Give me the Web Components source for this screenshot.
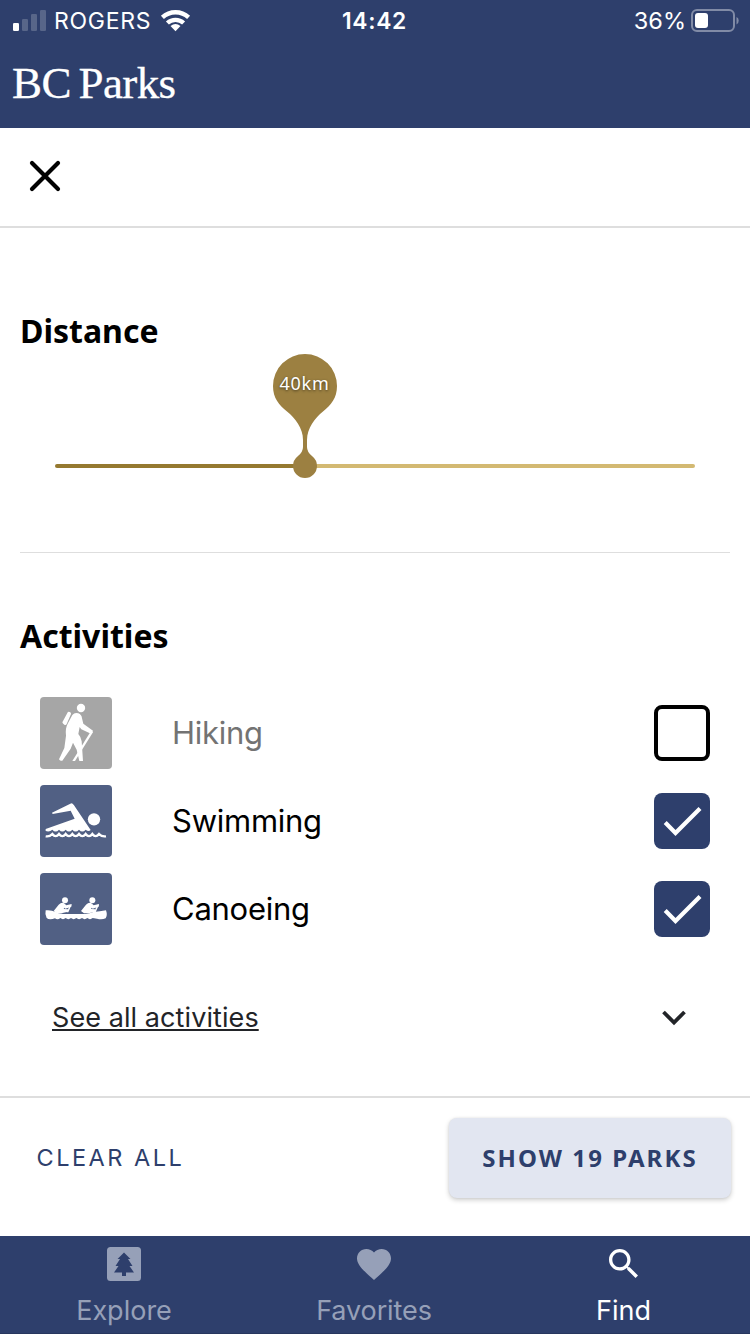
<!DOCTYPE html>
<html lang="en">
<head>
<meta charset="utf-8">
<title>BC Parks</title>
<style>
body{margin:0;background:#fff;font-family:Inter,"Liberation Sans",sans-serif}
</style>
</head>
<body>
<park-app></park-app>
<script>
function define(name, html) {
  const t = document.createElement('template');
  t.innerHTML = html;
  customElements.define(name, class extends HTMLElement {
    constructor() {
      super();
      this.attachShadow({mode: 'open'}).appendChild(t.content.cloneNode(true));
    }
  });
}

define('status-bar', `
<style>
:host{display:grid;grid-template-columns:1fr auto 1fr;height:40px;align-items:center;color:#fff;font-size:24px;line-height:42px;white-space:nowrap}
.l,.r{display:flex;align-items:center;height:40px}
.l{padding-left:13px}
.r{justify-content:flex-end;padding-right:11px}
.c{letter-spacing:.7px;font-weight:600;font-size:22.800px;margin-right:1px}
.l span{margin-left:7px;width:98px;font-size:23px;letter-spacing:.7px}
.l svg{display:block}
.r span{margin-right:5px;font-size:23.5px}
</style>
<div class="l">
 <svg width="34" height="22" viewBox="0 0 34 22" style="margin-top:-1px"><rect x="0" y="13" width="6" height="8" rx="1.3" fill="#fff"/><g fill="#fff" opacity=".2"><rect x="9" y="9" width="6" height="12" rx="1.3"/><rect x="18" y="4" width="6" height="17" rx="1.3"/><rect x="27" y="0" width="6" height="21" rx="1.3"/></g></svg>
 <span>ROGERS</span>
 <svg style="margin-left:8px;margin-top:-2px" width="32" height="23" viewBox="0 0 32 23"><g fill="none" stroke="#fff" stroke-width="4.400"><path d="M2.400 8.400a19.200 19.200 0 0 1 26.200 0"/><path d="M7.400 14a12 12 0 0 1 16.200 0"/></g><path fill="#fff" d="M15.500 22.300l-5-5.200q5-4.200 10 0z"/></svg>
</div>
<div class="c">14:42</div>
<div class="r"><span>36%</span><svg width="48" height="24" viewBox="0 0 48 24"><rect x="1" y="1" width="42" height="21" rx="5" fill="none" stroke="#fff" stroke-opacity=".4" stroke-width="2"/><rect x="4" y="4" width="13" height="15" rx="3" fill="#fff"/><path d="M45.500 8v7.500q2.200-1 2.200-3.800T45.500 8z" fill="#fff" opacity=".4"/></svg></div>
`);

define('brand-header', `
<style>
:host{display:block;height:128px;background:#2e3f6c}
.brand{display:block;padding-left:12px;margin-top:15px;color:#fff;font:45px/56px "Liberation Serif",serif;letter-spacing:-.6px;word-spacing:-3px;-webkit-text-stroke:.3px #fff;white-space:nowrap}
</style>
<status-bar></status-bar><div class="brand">BC Parks</div>
`);

define('close-bar', `
<style>
:host{display:flex;align-items:center;box-sizing:border-box;height:100px;padding-left:29px;padding-bottom:2px;border-bottom:2px solid #dedede}
svg{display:block}
</style>
<svg width="32" height="32" viewBox="0 0 32 32"><path d="M3 3l26 26M29 3L3 29" stroke="#000" stroke-width="4.200" stroke-linecap="round"/></svg>
`);

define('section-title', `
<style>:host{display:block;color:#000;font:700 32px/44px "Noto Sans","Open Sans",sans-serif;white-space:nowrap}</style><slot></slot>
`);

define('range-slider', `
<style>
:host{display:block;position:relative;height:124px;margin:0 35px}
.track{display:flex;height:4px;padding-top:110px}
.a{width:250px;background:#957930;border-radius:2px 0 0 2px}
.b{flex:1;background:#d3b972;border-radius:0 2px 2px 0}
svg{position:absolute;left:218px;top:0}
.v{position:absolute;left:218px;top:18px;width:64px;text-align:center;color:#fff;font:18px/22px "Noto Sans",sans-serif;letter-spacing:.7px;text-shadow:0 1px 3px rgba(0,0,0,.6);text-indent:-1px;white-space:nowrap}
</style>
<div class="track"><div class="a"></div><div class="b"></div></div>
<svg width="64" height="124" viewBox="0 0 64 124"><path fill="#9c8041" d="M32 0A32 32 0 0 1 64 32C64 44 58 51 50 57.500C42 64 34 74 34 86V93Q34 98 39 102Q44 106 44 112A12 12 0 0 1 20 112Q20 106 25 102Q30 98 30 93V86C30 74 22 64 14 57.500C6 51 0 44 0 32A32 32 0 0 1 32 0Z"/></svg>
<div class="v"><slot></slot></div>
`);

define('activity-row', `
<style>
:host{display:flex;align-items:center;height:72px;padding:0 40px;margin-bottom:16px;color:#000}
.tile{width:72px;height:72px;border-radius:4px;background:#516084;overflow:hidden}
:host([off]) .tile{background:#a6a6a6}
.name{flex:1;margin-left:60px;font-size:31px;line-height:44px;white-space:nowrap;letter-spacing:-.26px}
:host([off]) .name{color:#737373}
.box{box-sizing:border-box;width:56px;height:56px;border-radius:8px;background:#2e3f6c}
:host([off]) .box{background:#fff;border:4px solid #000}
:host([off]) .box svg{display:none}
svg{display:block}
</style>
<div class="tile"><slot name="icon"></slot></div>
<div class="name"><slot></slot></div>
<div class="box"><svg width="56" height="56" viewBox="0 0 56 56"><path d="M11.200 29.500L21.500 40L46 15.500" fill="none" stroke="#fff" stroke-width="4.200"/></svg></div>
`);

define('icon-hiking', `
<style>:host,svg{display:block}</style>
<svg width="72" height="72" viewBox="0 0 216 216"><g fill="#fff"><circle cx="123" cy="33" r="12.500"/><path d="M82 48q2-5 7-3t4 6L80 81q-2 5-7 2t-6-7z"/><path d="M97 54Q104 45 115 49Q125 53 126 64L130 80L159 101L156 109L148 108L124 97L119 90L115 111Q122 118 125 133L129 192H118L110 158L99 137L92 155L67 191Q61 193 57 187L73 153L78 116Q75 95 83 80Z"/><path d="M153 102l6 4-54 86h-8z"/></g></svg>
`);

define('icon-swimming', `
<style>:host,svg{display:block}</style>
<svg width="72" height="72" viewBox="0 0 216 216"><g fill="#fff"><circle cx="162" cy="103" r="18.500"/><path d="M36 83L94 55Q98 55 102 61L152 135Q146 142 137 134Q127 145 117 134Q107 145 97 134Q87 145 77 134Q67 145 57 134Q47 145 37 134Q29 142 17 138V132L104 101L92 77L38 87Z"/></g><path d="M17 154q12 2 20-7q10 13 20 0q10 13 20 0q10 13 20 0q10 13 20 0q10 13 20 0q10 13 20 0q10 13 20 0q8 9 21 7" fill="none" stroke="#fff" stroke-width="7"/></svg>
`);

define('icon-canoeing', `
<style>:host,svg{display:block}</style>
<svg width="72" height="72" viewBox="0 0 216 216"><defs><g id="p"><circle cx="75" cy="82" r="9"/><path d="M41 114L56 95Q66 86 74 92L79 97L95 93L94 101L76 107L73 104L71 108L84 109V116L64 121H50Z"/><path d="M90 95l4 2-9 21h-5z"/></g></defs><g fill="#fff"><use href="#p"/><use href="#p" x="82"/><path d="M17 112Q33 110 47 117Q56 123 82 123H138Q148 122 160 117Q180 116 198 112Q203 126 197 136Q185 141 171 137L158 135Q150 142 142 135Q134 142 126 135Q117 142 109 135Q101 142 93 135Q85 142 77 135Q69 142 61 135Q53 142 45 136Q28 142 20 135Q14 125 17 112Z"/></g></svg>
`);

define('see-all', `
<style>
:host{display:flex;justify-content:space-between;align-items:center;height:40px;padding:0 64px 0 52px;color:#222428}
span{font-size:27px;line-height:32px;letter-spacing:.08px;text-decoration:underline;text-decoration-thickness:2px;text-underline-offset:2px;text-decoration-skip-ink:none;white-space:nowrap}
svg{display:block}
</style>
<span><slot></slot></span><svg width="24" height="16" viewBox="0 0 24 16"><path d="M1.500 2L12 12.500L22.500 2" fill="none" stroke="#222428" stroke-width="3.800"/></svg>
`);

define('action-bar', `
<style>
:host{display:flex;box-sizing:border-box;height:140px;border-top:2px solid #dedede;padding:20px 19px 0 36.500px;justify-content:space-between;color:#2e3f6c}
.clear{font-size:23.500px;line-height:80px;letter-spacing:2.5px;white-space:nowrap}
.show{width:282px;height:80px;border-radius:8px;background:#e2e6f1;box-shadow:0 2px 5px rgba(0,0,0,.2),0 0 2px rgba(0,0,0,.08);text-align:center;font:700 24px/80px "Noto Sans",sans-serif;letter-spacing:2.050px;white-space:nowrap}
</style>
<div class="clear">CLEAR ALL</div><div class="show">SHOW 19 PARKS</div>
`);

define('tab-item', `
<style>
:host{display:flex;flex-direction:column;align-items:center;color:#96a0b8;font-size:27px;line-height:34px;white-space:nowrap}
:host([active]){color:#fff}
.i{height:56px;display:flex;align-items:center}
.t{margin-top:2px}
</style>
<div class="i"><slot name="icon"></slot></div><div class="t"><slot></slot></div>
`);

define('tab-bar', `
<style>
:host{display:grid;grid-template-columns:248px 252px 247px;box-sizing:border-box;height:98px;background:#2e3f6c;border-bottom:1px solid #27365e}
svg{display:block}
</style>
<tab-item><svg slot="icon" width="36" height="36" viewBox="0 0 36 36"><rect x="1" y="1" width="34" height="34" rx="3.500" fill="#96a0b8"/><path fill="#2e3f6c" d="M18 6.500L24.500 13H22L26.500 20H23.500L28 26.500H20V30H16V26.500H8L12.500 20H9.500L14 13H11.500Z"/></svg><span>Explore</span></tab-item>
<tab-item><svg slot="icon" width="34" height="31" viewBox="2 3 20 18.350" preserveAspectRatio="none"><path fill="#96a0b8" d="M12 21.350l-1.450-1.320C5.400 15.360 2 12.280 2 8.500 2 5.420 4.420 3 7.500 3c1.740 0 3.410.81 4.500 2.090C13.090 3.810 14.760 3 16.500 3 19.580 3 22 5.420 22 8.500c0 3.780-3.400 6.860-8.550 11.540L12 21.350z"/></svg><span style="letter-spacing:-.1px">Favorites</span></tab-item>
<tab-item active><svg slot="icon" width="29" height="29" viewBox="3 3 17.490 17.490" style="margin-top:-1px"><path fill="#fff" d="M15.500 14h-.79l-.28-.27C15.410 12.590 16 11.110 16 9.500 16 5.910 13.090 3 9.500 3S3 5.910 3 9.500 5.910 16 9.500 16c1.610 0 3.090-.59 4.230-1.570l.27.28v.79l5 4.990L20.490 19l-4.990-5zm-6 0C7.010 14 5 11.990 5 9.500S7.010 5 9.500 5 14 7.010 14 9.500 11.990 14 9.500 14z"/></svg><span>Find</span></tab-item>
`);

define('park-app', `
<style>
:host{display:flex;flex-direction:column;width:750px;height:1334px;overflow:hidden;background:#fff}
main{flex:1;display:flex;flex-direction:column}
.dist{box-sizing:border-box;height:325px;margin:0 20px;padding-top:81px;border-bottom:1px solid #dedede}
.dist range-slider{margin-top:1px}
.acts{padding-top:61px}
.acts section-title{margin:0 20px 39px}
see-all{margin-top:53px}
</style>
<brand-header></brand-header>
<close-bar></close-bar>
<main>
 <div class="dist"><section-title>Distance</section-title><range-slider>40km</range-slider></div>
 <div class="acts"><section-title>Activities</section-title>
  <activity-row off><icon-hiking slot="icon"></icon-hiking>Hiking</activity-row>
  <activity-row><icon-swimming slot="icon"></icon-swimming>Swimming</activity-row>
  <activity-row><icon-canoeing slot="icon"></icon-canoeing>Canoeing</activity-row>
  <see-all>See all activities</see-all>
 </div>
</main>
<action-bar></action-bar>
<tab-bar></tab-bar>
`);
</script>
</body>
</html>
